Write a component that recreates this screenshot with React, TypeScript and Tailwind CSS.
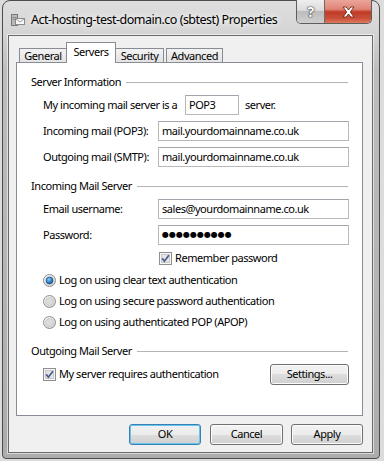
import type { ReactNode } from "react";

const textBox =
  "h-[20px] flex items-center border border-[#b9b9b9] border-t-[#a3a6ad] bg-white pl-[3px] whitespace-nowrap";

const winButton =
  "flex h-[21px] items-center justify-center rounded-[3px] border border-[#707070] bg-[linear-gradient(#f3f3f3_0%,#ececec_50%,#dddddd_50%,#d0d0d0_100%)] shadow-[inset_0_0_0_1px_#fbfbfb]";

const GroupHeader = ({ title, top }: { title: string; top: string }) => (
  <div className={`${top} flex h-[14px] items-center pl-[14px] pr-[14px]`}>
    <span className="leading-[14px]">{title}</span>
    <div className="ml-[5px] h-px flex-1 bg-[#b3b3b3]" />
  </div>
);

const CheckBox = () => (
  <svg width="13" height="13" viewBox="0 0 13 13" className="shrink-0">
    <rect x="0.5" y="0.5" width="12" height="12" fill="#f6f6f6" stroke="#8f8f8f" />
    <rect x="2.5" y="2.5" width="8" height="8" fill="#e4e4e4" stroke="#c9c9c9" />
    <path d="M3.2 6.4 L5.4 9.2 L9.9 3.2" fill="none" stroke="#4a5d8f" strokeWidth="1.7" />
  </svg>
);

const Radio = ({ checked }: { checked?: boolean }) => (
  <svg width="13" height="13" viewBox="0 0 13 13" className="shrink-0">
    <defs>
      <radialGradient id="rdBg" cx="0.35" cy="0.3" r="0.8">
        <stop offset="0" stopColor="#ffffff" />
        <stop offset="1" stopColor="#d2d2d2" />
      </radialGradient>
      <radialGradient id="rdDot" cx="0.4" cy="0.35" r="0.7">
        <stop offset="0" stopColor="#8ad0f7" />
        <stop offset="0.6" stopColor="#2f7fc4" />
        <stop offset="1" stopColor="#154a85" />
      </radialGradient>
    </defs>
    <circle cx="6.5" cy="6.5" r="6" fill="url(#rdBg)" stroke="#8e8f8f" />
    <circle cx="6.5" cy="6.5" r="4" fill="#dcdcdc" stroke="#c4c4c4" strokeWidth="0.8" />
    {checked && <circle cx="6.5" cy="6.5" r="3.4" fill="url(#rdDot)" stroke="#1a4f86" strokeWidth="0.6" />}
  </svg>
);

const FieldRow = ({ label, value, top }: { label: string; value: ReactNode; top: string }) => (
  <div className={`${top} flex h-[20px] items-center pl-[26px]`}>
    <span className="w-[115px] shrink-0 whitespace-nowrap">{label}</span>
    <div className={`${textBox} w-[191px]`}>{value}</div>
  </div>
);

const RadioRow = ({ label, checked, top }: { label: string; checked?: boolean; top: string }) => (
  <div className={`${top} flex h-[16px] items-center gap-[3px] pl-[26px]`}>
    <Radio checked={checked} />
    <span>{label}</span>
  </div>
);

const TitleIcon = () => (
  <svg width="14" height="14" viewBox="0 0 14 14" className="shrink-0">
    <rect x="0.5" y="1.5" width="6" height="11" fill="#b8b8b8" stroke="#7a7a7a" />
    <path d="M1.5 4.5h4M1.5 6.5h4" stroke="#8d8d8d" />
    <rect x="4.5" y="5.5" width="9" height="6" fill="#f7f7f7" stroke="#8a8a8a" />
    <path d="M4.5 5.5 L9 9 L13.5 5.5" fill="none" stroke="#9a9a9a" />
  </svg>
);

export default function App() {
  return (
    <div className="h-[461px] w-[384px] overflow-hidden bg-[#dcdcdc] pl-[2px] font-['Noto_Sans',sans-serif] text-[11px] tracking-[-0.45px] text-black">
      <div className="flex h-[459px] w-[378px] flex-col rounded-t-[8px] rounded-b-[4px] border border-[#4c4c4c] bg-[linear-gradient(180deg,#dedede_0px,#d6d6d6_28px,#bdbdbd_70px,#acacac_100%)]">
        {/* title bar */}
        <div className="flex h-[34px] shrink-0">
          <div className="mt-[12px] flex h-[14px] items-center gap-[6px] self-start pl-[8px]">
            <TitleIcon />
            <span className="whitespace-nowrap text-[12.5px] leading-[16px] tracking-[-0.5px] text-black [text-shadow:0_0_6px_#ffffff,0_0_10px_#ffffff]">
              Act-hosting-test-domain.co (sbtest) Properties
            </span>
          </div>
          <div className="-mt-px mr-[7px] ml-auto flex h-[24px] self-start overflow-hidden rounded-b-[5px] border border-t-0 border-[#5d5d5d]">
            <div className="flex w-[28px] items-center justify-center border-r border-[#6a6a6a] bg-[linear-gradient(#eeeeee_0%,#dcdcdc_45%,#bdbdbd_50%,#cfcfcf_100%)]">
              <span className="text-[14px] font-bold leading-none text-white [text-shadow:0_0_1px_#333,0_0_1px_#333,0_0_2px_#555]">
                ?
              </span>
            </div>
            <div className="flex w-[46px] items-center justify-center bg-[linear-gradient(#eba69c_0%,#e08474_40%,#c13a26_52%,#c9503a_80%,#e07a5c_100%)]">
              <svg width="15" height="12" viewBox="0 0 15 12">
                <path
                  d="M2 1h3.2L7.5 4 9.8 1H13L9.3 6 13 11H9.8L7.5 8 5.2 11H2l3.7-5z"
                  fill="#ffffff"
                  stroke="#6b2a20"
                  strokeWidth="0.9"
                  strokeLinejoin="round"
                />
              </svg>
            </div>
          </div>
        </div>

        {/* client area */}
        <div className="ml-[5px] flex h-[418px] w-[365px] flex-col border border-[#6b6b6b] bg-[#f0f0f0] pt-[6px] pl-[7px] shadow-[0_0_0_1px_rgba(255,255,255,0.55)]">
          <div className="flex h-[20px] items-end">
            <div className="ml-[3px] flex h-[14px] w-[48px] items-center justify-center border border-b-0 border-[#898c95] bg-[linear-gradient(#f2f2f2,#e3e3e3)] leading-none">
              General
            </div>
            <div className="relative z-10 -mb-px -ml-px flex h-[21px] w-[50px] items-start justify-center border border-b-0 border-[#898c95] bg-white pt-[2px] leading-[14px]">
              Servers
            </div>
            <div className="-ml-px flex h-[14px] w-[49px] items-center justify-center border border-b-0 border-[#898c95] bg-[linear-gradient(#f2f2f2,#e3e3e3)] leading-none">
              Security
            </div>
            <div className="ml-[2px] flex h-[14px] w-[57px] items-center justify-center border border-b-0 border-[#898c95] bg-[linear-gradient(#f2f2f2,#e3e3e3)] leading-none">
              Advanced
            </div>
          </div>

          <div className="flex h-[354px] w-[347px] flex-col border border-[#898c95] bg-white">
            <GroupHeader title="Server Information" top="mt-[12px]" />
            <div className="mt-[6px] flex h-[20px] items-center pl-[26px]">
              <span className="w-[142px] shrink-0 whitespace-nowrap">My incoming mail server is a</span>
              <div className={`${textBox} w-[54px]`}>POP3</div>
              <span className="ml-[6px]">server.</span>
            </div>
            <FieldRow top="mt-[6px]" label="Incoming mail (POP3):" value="mail.yourdomainname.co.uk" />
            <FieldRow top="mt-[6px]" label="Outgoing mail (SMTP):" value="mail.yourdomainname.co.uk" />

            <GroupHeader title="Incoming Mail Server" top="mt-[12px]" />
            <FieldRow top="mt-[6px]" label="Email username:" value="sales@yourdomainname.co.uk" />
            <FieldRow
              top="mt-[6px]"
              label="Password:"
              value={<span className="font-['DejaVu_Sans',sans-serif] text-[8px] tracking-[0px]">●●●●●●●●●●</span>}
            />
            <div className="mt-[6px] flex h-[14px] items-center gap-[3px] pl-[142px]">
              <CheckBox />
              <span>Remember password</span>
            </div>
            <RadioRow top="mt-[7px]" label="Log on using clear text authentication" checked />
            <RadioRow top="mt-[5px]" label="Log on using secure password authentication" />
            <RadioRow top="mt-[5px]" label="Log on using authenticated POP (APOP)" />

            <GroupHeader title="Outgoing Mail Server" top="mt-[14px]" />
            <div className="mt-[6px] flex h-[20px] items-center pr-[13px] pl-[26px]">
              <CheckBox />
              <span className="ml-[3px]">My server requires authentication</span>
              <div className={`${winButton} ml-auto h-[20px] w-[79px]`}>Settings...</div>
            </div>
          </div>

          <div className="mt-[8px] flex pr-[9px]">
            <div className="ml-auto flex gap-[9px]">
              <div className="flex h-[21px] w-[72px] items-center justify-center rounded-[3px] border border-[#3c7fb1] bg-[linear-gradient(#f2f2f2_0%,#ebebeb_50%,#dddddd_50%,#cfcfcf_100%)] shadow-[inset_0_0_0_1px_#63c6f1]">
                OK
              </div>
              <div className={`${winButton} w-[73px]`}>Cancel</div>
            </div>
            <div className={`${winButton} ml-[8px] w-[72px]`}>Apply</div>
          </div>
        </div>
      </div>
    </div>
  );
}
